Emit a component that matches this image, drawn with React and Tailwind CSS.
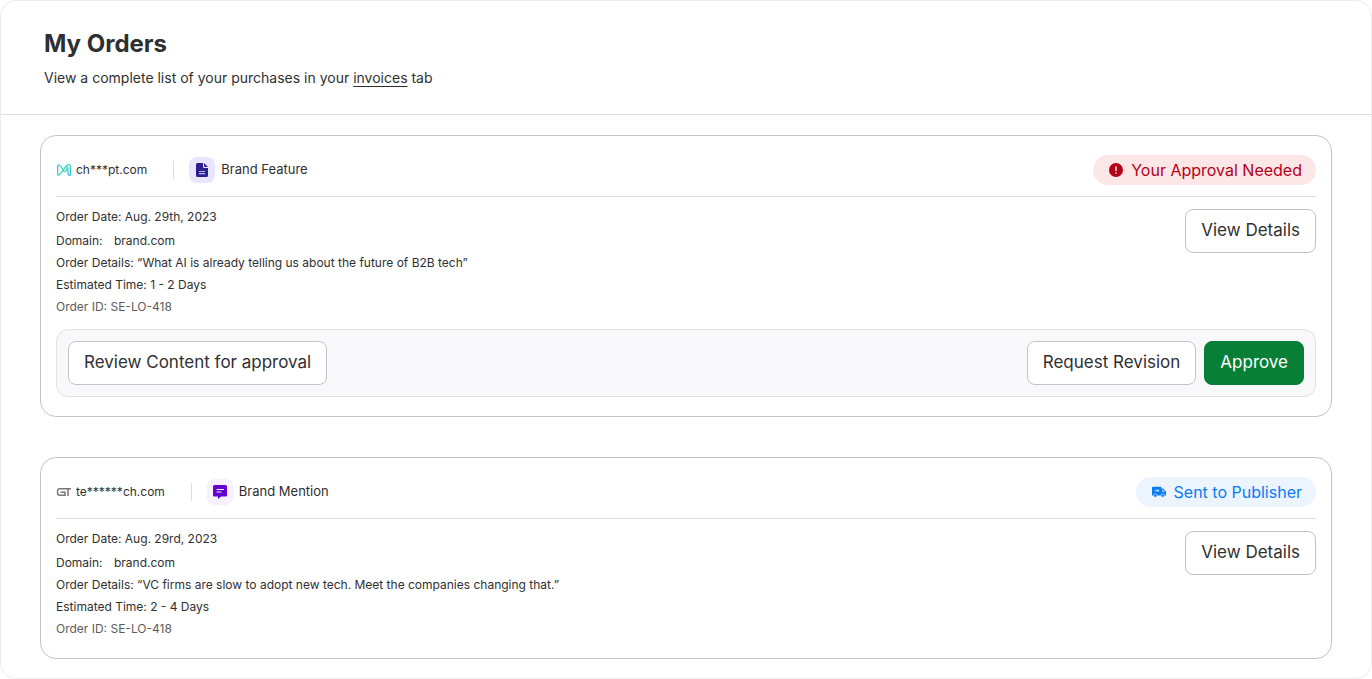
import React from 'react';
import clsx from 'clsx';

function WaveMark() {
  return (
    <svg width="16" height="14" viewBox="0 0 16 14" fill="none" aria-hidden="true">
      <defs>
        <linearGradient id="wave" x1="1" y1="1" x2="15" y2="13" gradientUnits="userSpaceOnUse">
          <stop stopColor="#2fc4e8" />
          <stop offset="0.5" stopColor="#35dcae" />
          <stop offset="1" stopColor="#2fb6f0" />
        </linearGradient>
      </defs>
      <path
        d="M1.700 3V11Q1.700 12.800 3.200 11.800C6 9.800 8 5.500 10.400 2.800Q11.400 1.600 12.600 1.600Q14.300 1.600 14.300 3.400V11Q14.300 12.400 13.300 12.400Q12.200 12.400 12.100 11C12 8.500 11.900 6 11 3.400"
        stroke="url(#wave)"
        strokeWidth="1.300"
        strokeLinejoin="round"
      />
      <path
        d="M1.700 3Q1.700 1.400 3.200 2C5 3 6 5 7.200 7.200C8 8.800 9 9 10 7.500L12.200 4.500"
        stroke="url(#wave)"
        strokeWidth="1.300"
        strokeLinejoin="round"
      />
    </svg>
  );
}

function GridTechMark() {
  return (
    <svg width="16" height="14" viewBox="0 0 16 14" fill="none" stroke="#777" strokeWidth="1.500" aria-hidden="true">
      <path d="M15 3.800H3.600Q1.600 3.800 1.600 5.700V8.300Q1.600 10.200 3.600 10.200H9V7.200H4.600" />
      <path d="M12 4V11" />
    </svg>
  );
}

function DocumentIcon() {
  return (
    <svg width="12" height="14" viewBox="0 0 12 14" aria-hidden="true">
      <path fill="#2b208f" d="M1.500 0H7V3.500Q7 5 8.500 5H12V12.500Q12 14 10.500 14H1.500Q0 14 0 12.500V1.500Q0 0 1.500 0Z" />
      <path fill="#2b208f" d="M8 0L12 4H9Q8 4 8 3Z" />
      <path stroke="#b9b3ef" strokeWidth="1.200" d="M3 8.500H9M3 10.700H9" />
    </svg>
  );
}

function MessageIcon() {
  return (
    <svg width="14" height="14" viewBox="0 0 14 14" aria-hidden="true">
      <path fill="#6400cf" d="M1.500 0H12.500Q14 0 14 1.500V10Q14 11.500 12.500 11.500H8L5 14V11.500H1.500Q0 11.500 0 10V1.500Q0 0 1.500 0Z" />
      <path stroke="#f2eaff" strokeWidth="1.200" strokeLinecap="round" d="M4 4.500H10.500M4 7H8" />
    </svg>
  );
}

function AlertIcon() {
  return (
    <svg width="14" height="14" viewBox="0 0 14 14" aria-hidden="true">
      <circle cx="7" cy="7" r="7" fill="#b3001b" />
      <path d="M7 4V7.500" stroke="#fde5e5" strokeWidth="1.500" strokeLinecap="round" />
      <circle cx="7" cy="10" r="0.850" fill="#fde5e5" />
    </svg>
  );
}

function TruckIcon() {
  return (
    <svg width="14" height="14" viewBox="0 0 14 14" aria-hidden="true">
      <path fill="#0a7cf5" d="M1 1.800H8.500Q9.500 1.800 9.500 2.800V3.600H11L14 6.600V10.600H0V2.800Q0 1.800 1 1.800Z" />
      <path fill="#ebf4ff" d="M10.300 4.800V6.800H12.700L10.700 4.800Z" />
      <path d="M2.800 5.600H6.800M5.400 4.200L6.800 5.600L5.400 7" fill="none" stroke="#ebf4ff" strokeWidth="0.900" />
      <circle cx="3.300" cy="10.600" r="1.700" fill="#0a7cf5" stroke="#ebf4ff" strokeWidth="0.600" />
      <circle cx="10.700" cy="10.600" r="1.700" fill="#0a7cf5" stroke="#ebf4ff" strokeWidth="0.600" />
    </svg>
  );
}

const PRODUCTS = {
  feature: { label: 'Brand Feature', icon: DocumentIcon, tile: 'bg-[#e9e5ff]' },
  mention: { label: 'Brand Mention', icon: MessageIcon, tile: 'bg-[#f6f0ff]' },
};

const STATUSES = {
  approval: { label: 'Your Approval Needed', icon: AlertIcon, pill: 'bg-[#fde6e6] text-[#b3001b]' },
  sent: { label: 'Sent to Publisher', icon: TruckIcon, pill: 'bg-[#ebf4ff] text-[#0a7cf5]' },
};

const ORDERS = [
  {
    site: 'ch***pt.com',
    mark: WaveMark,
    product: 'feature',
    status: 'approval',
    date: 'Aug. 29th, 2023',
    domain: 'brand.com',
    details: '“What AI is already telling us about the future of B2B tech”',
    time: '1 - 2 Days',
    id: 'SE-LO-418',
  },
  {
    site: 'te******ch.com',
    mark: GridTechMark,
    product: 'mention',
    status: 'sent',
    date: 'Aug. 29rd, 2023',
    domain: 'brand.com',
    details: '“VC firms are slow to adopt new tech. Meet the companies changing that.”',
    time: '2 - 4 Days',
    id: 'SE-LO-418',
  },
];

function Button({ primary, className, children }) {
  return (
    <button
      type="button"
      className={clsx(
        'h-11 shrink-0 cursor-pointer rounded-lg border px-[15px] text-[17px] whitespace-nowrap',
        primary ? 'border-[#077f36] bg-[#077f36] text-white' : 'border-[#c3c3cc] bg-white text-[#2f2f31]',
        className
      )}
    >
      {children}
    </button>
  );
}

function OrderCard({ order }) {
  const product = PRODUCTS[order.product];
  const status = STATUSES[order.status];
  const Mark = order.mark;
  const ProductIcon = product.icon;
  const StatusIcon = status.icon;

  return (
    <article className="rounded-2xl border border-[#c3c3cc] px-[15px] pt-[19px] pb-[18px]">
      {/* Publisher, product and status */}
      <div className="flex items-center justify-between border-b border-[#dedee0] pb-[11px]">
        <div className="flex items-center text-[13px]">
          <Mark />
          <span className="ml-1 text-xs">{order.site}</span>
          <span className="ml-[26px] h-[18px] w-px bg-[#dedee0]" />
          <span className={clsx('ml-[15px] flex size-[26px] items-center justify-center rounded-lg', product.tile)}>
            <ProductIcon />
          </span>
          <span className="ml-1.5">{product.label}</span>
        </div>
        <div className={clsx('flex h-[30px] items-center gap-2 rounded-full pr-3.5 pl-4 text-base', status.pill)}>
          <StatusIcon />
          {status.label}
        </div>
      </div>

      {/* Order info */}
      <div className="flex items-start justify-between gap-6 pt-[9px]">
        <div className="text-xs leading-[22px]">
          <p className="mb-0.5">Order Date: {order.date}</p>
          <p>
            Domain: <span className="ml-2">{order.domain}</span>
          </p>
          <p>Order Details: {order.details}</p>
          <p>Estimated Time: {order.time}</p>
          <p className="text-[#5c5c60]">Order ID: {order.id}</p>
        </div>
        <Button className="mt-[3px]">View Details</Button>
      </div>

      {/* Approval actions */}
      {order.status === 'approval' && (
        <div className="mt-[11px] mb-px flex flex-wrap items-center justify-between gap-2 rounded-xl border border-[#e2e2e5] bg-[#f8f8fa] p-[11px]">
          <Button>Review Content for approval</Button>
          <div className="flex gap-2">
            <Button>Request Revision</Button>
            <Button primary>Approve</Button>
          </div>
        </div>
      )}
    </article>
  );
}

export default function App() {
  return (
    <main className="min-h-screen rounded-2xl border border-[#ececee] bg-white font-['Inter',sans-serif] text-[#2f2f31]">
      <header className="border-b border-[#dfdfe1] px-[43px] pt-[27px] pb-6">
        <h1 className="text-2xl leading-8 font-bold">My Orders</h1>
        <p className="mt-2 text-sm leading-5 pb-0.5">
          View a complete list of your purchases in your{' '}
          <a href="#invoices" className="underline decoration-1 underline-offset-3">
            invoices
          </a>{' '}
          tab
        </p>
      </header>

      <div className="flex flex-col gap-10 px-[39px] pt-5 pb-[19px]">
        {ORDERS.map((order) => (
          <OrderCard key={order.site} order={order} />
        ))}
      </div>
    </main>
  );
}
